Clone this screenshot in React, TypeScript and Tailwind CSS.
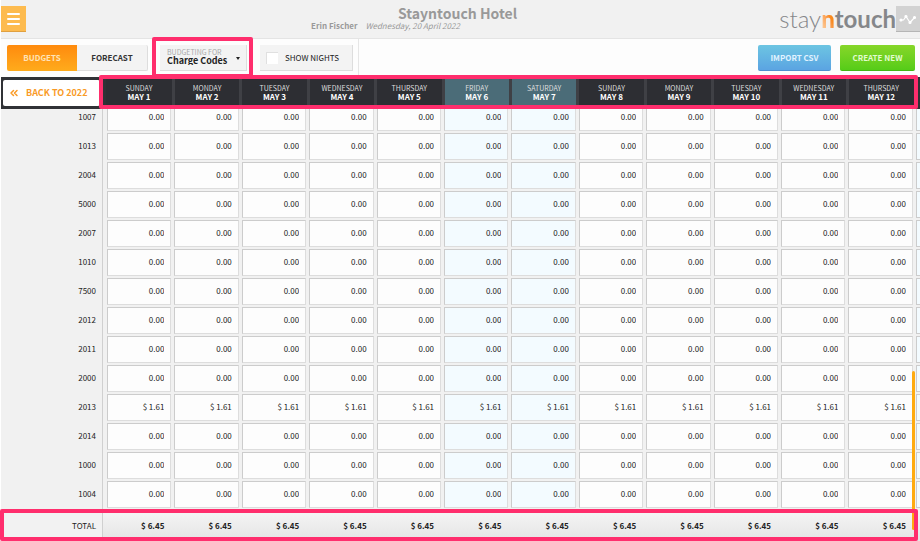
import { ChevronsLeft } from 'lucide-react'
import clsx from 'clsx'

const DAYS = [
  { day: 'SUNDAY', date: 'MAY 1' },
  { day: 'MONDAY', date: 'MAY 2' },
  { day: 'TUESDAY', date: 'MAY 3' },
  { day: 'WEDNESDAY', date: 'MAY 4' },
  { day: 'THURSDAY', date: 'MAY 5' },
  { day: 'FRIDAY', date: 'MAY 6', weekend: true },
  { day: 'SATURDAY', date: 'MAY 7', weekend: true },
  { day: 'SUNDAY', date: 'MAY 8' },
  { day: 'MONDAY', date: 'MAY 9' },
  { day: 'TUESDAY', date: 'MAY 10' },
  { day: 'WEDNESDAY', date: 'MAY 11' },
  { day: 'THURSDAY', date: 'MAY 12' },
]

const ROWS = [
  { code: '1007', value: '0.00' },
  { code: '1013', value: '0.00' },
  { code: '2004', value: '0.00' },
  { code: '5000', value: '0.00' },
  { code: '2007', value: '0.00' },
  { code: '1010', value: '0.00' },
  { code: '7500', value: '0.00' },
  { code: '2012', value: '0.00' },
  { code: '2011', value: '0.00' },
  { code: '2000', value: '0.00' },
  { code: '2013', value: '$ 1.61' },
  { code: '2014', value: '0.00' },
  { code: '1000', value: '0.00' },
  { code: '1004', value: '0.00' },
]

function Header() {
  return (
    <header className="relative flex h-[39px] items-center justify-between border-b border-[#e4e4e4] bg-[#f1f1f1]">
      <button
        aria-label="Menu"
        className="flex h-[26px] w-[25px] flex-col items-center justify-center gap-[3px] border-b border-[#e0a040] bg-[#fdbb4f]"
      >
        <span className="h-[2px] w-[13px] rounded-full bg-white" />
        <span className="h-[2px] w-[13px] rounded-full bg-white" />
        <span className="h-[2px] w-[13px] rounded-full bg-white" />
      </button>

      {/* hotel name, centred over the bar */}
      <div className="absolute top-[5px] right-[6px] left-0 text-center text-[#999]">
        <h1 className="text-[14px] leading-4 font-bold">Stayntouch Hotel</h1>
        <p className="flex justify-center gap-2 pr-36 text-[8px] leading-[10px]">
          <span className="font-bold">Erin Fischer</span>
          <em>Wednesday, 20 April 2022</em>
        </p>
      </div>

      <div className="flex items-center">
        <div className="font-[Lato,sans-serif] text-[24px] leading-[26px] text-[#85878a]">
          <span className="font-light">stay</span>
          <span className="bg-linear-to-tr from-[#fcc48c] from-20% to-[#f98a1e] to-60% bg-clip-text font-black text-transparent">n</span>
          <span className="font-bold">touch</span>
        </div>
        <button
          aria-label="Statistics"
          className="flex h-[26px] w-6 items-center justify-center border-b border-[#b5b5b5] bg-[#d2d2d2]"
        >
          <svg width="18" height="12" viewBox="0 0 18 12" fill="none" stroke="#fff" strokeWidth="1.2" strokeLinejoin="round">
            <path d="M2 7 H4.5 L7 3.5 L11 9.5 L15.5 4.5" />
            <circle cx="2" cy="7" r="1" fill="#fff" />
            <circle cx="7" cy="3.5" r="1" fill="#fff" />
            <circle cx="11" cy="9.5" r="1" fill="#fff" />
            <circle cx="15.5" cy="4.5" r="1" fill="#fff" />
          </svg>
        </button>
      </div>
    </header>
  )
}

function Toolbar() {
  return (
    <div className="flex h-[38px] items-stretch bg-[#fdfdfd] pr-[5px] pl-[6px] text-[8px]">
      <div className="flex py-[6px]">
        <button className="w-[70px] rounded-l-xs bg-linear-to-b from-[#ff8a0d] to-[#ffab1c] font-bold text-[#ffe3b8]">BUDGETS</button>
        <button className="w-[71px] rounded-r-xs border-r border-b border-[#ddd] bg-[#f3f3f3] font-bold text-[#333]">FORECAST</button>
      </div>

      <div className="relative ml-3 flex py-[6px]">
        <label className="relative flex w-[87px] flex-col justify-center border-r border-b border-[#ddd] bg-[#f3f3f3] pb-[2px] pl-[7px]">
          <span className="text-[7px] leading-[8px] text-[#aaa]">BUDGETING FOR</span>
          <select className="w-full appearance-none bg-transparent text-[9px] leading-[9px] font-bold text-[#222]">
            <option>Charge Codes</option>
            <option>Markets</option>
          </select>
          <span className="pointer-events-none absolute top-3 right-[6px] border-x-2 border-t-[3px] border-x-transparent border-t-[#222]" />
        </label>
        <div className="pointer-events-none absolute -top-[2px] -right-[6px] -bottom-px -left-2 rounded-xs border-4 border-[#ff2e6d]" />
      </div>

      <div className="ml-[13px] flex border-r border-[#e6e6e6] py-[6px] pr-[5px]">
        <label className="flex w-[93px] items-center gap-[7px] border-r border-b border-[#ddd] bg-[#f3f3f3] pl-[6px] text-[#222]">
          <input type="checkbox" className="size-3 appearance-none border-t border-l border-[#e0e0e0] bg-white" />
          SHOW NIGHTS
        </label>
      </div>

      <div className="ml-auto flex gap-[9px] py-[6px]">
        <button className="w-[73px] rounded-xs border-b border-[#4f8fd0] bg-linear-to-b from-[#6dc5e2] to-[#5ba4e2] font-bold text-[#e0f3ff]">IMPORT CSV</button>
        <button className="w-[75px] rounded-xs border-b border-[#45b512] bg-linear-to-b from-[#86d629] to-[#55cc18] font-bold text-[#e2fbd0]">CREATE NEW</button>
      </div>
    </div>
  )
}

function BudgetTable() {
  return (
    <div className="relative">
      <table className="w-full table-fixed border-collapse text-[8px] text-[#222]">
        <colgroup>
          <col className="w-[105px]" />
          {DAYS.map(({ date }) => (
            <col key={date} />
          ))}
          <col className="w-[5px]" />
        </colgroup>

        <thead>
          <tr className="h-8 bg-[#303236]">
            <th className="p-0 pr-[6px] pl-[2px]">
              <button className="flex h-[26px] w-full items-center gap-2 rounded-xs bg-white pl-[5px] text-[9px] font-bold text-[#f99a26]">
                <ChevronsLeft size={12} strokeWidth={3} />
                <span className="-ml-[2px]">BACK TO 2022</span>
              </button>
            </th>
            {DAYS.map(({ day, date, weekend }) => (
              <th
                key={date}
                scope="col"
                className={clsx('border-r-[3px] border-[#3f4045] p-0 pb-[2px] text-center text-white', weekend ? 'bg-[#4b6c78]' : 'bg-[#2d2e33]')}
              >
                <span className="block text-[7px] leading-[8px] font-normal text-[#ddd]">{day}</span>
                <span className="block text-[8px] leading-[9px] font-bold">{date}</span>
              </th>
            ))}
            <th className="p-0" />
          </tr>
        </thead>

        <tbody>
          {ROWS.map(({ code, value }, i) => (
            // the first row is partly scrolled under the header
            <tr key={code} className={i === 0 ? 'h-6' : 'h-[29px]'}>
              <th scope="row" className="p-0">
                <div className={clsx('mr-[3px] flex items-center justify-end border-r border-[#d0d0d0] pr-[6px] font-normal', i === 0 ? 'h-6 pb-[9px]' : 'h-[29px] pb-1')}>
                  {code}
                </div>
              </th>
              {DAYS.map(({ date, weekend }) => (
                <td key={date} className="p-0 pr-[2px] pb-[2px] pl-px">
                  <input
                    defaultValue={value}
                    aria-label={`${code} ${date}`}
                    className={clsx(
                      'block w-full rounded-none border-[#ccc] pr-[6px] text-right',
                      weekend ? 'bg-[#f3fbff]' : 'bg-[#fdfdfd]',
                      i === 0 ? 'h-[22px] border-x border-b border-r-[#ddd] border-b-[#ddd] pb-[7px]' : 'h-[27px] border border-r-[#ddd] border-b-[#ddd] pb-[2px]',
                    )}
                  />
                </td>
              ))}
              <td className="p-0 pb-[2px] pl-px">
                <div className={clsx('border-l border-[#ccc] bg-[#f3fbff]', i === 0 ? 'h-[22px] border-b' : 'h-[27px] border-y')} />
              </td>
            </tr>
          ))}
        </tbody>

        <tfoot>
          <tr className="h-[31px] bg-linear-to-b from-[#f6f6f6] to-[#e4e4e4]">
            <th scope="row" className="p-0">
              <div className="mr-[3px] flex h-[31px] items-center justify-end border-r border-[#d0d0d0] bg-[#f2f2f2] pr-[6px] font-normal">
                TOTAL
              </div>
            </th>
            {DAYS.map(({ date }) => (
              <td key={date} className="p-0 pr-[9px] text-right font-bold">
                $ 6.45
              </td>
            ))}
            <td className="p-0" />
          </tr>
        </tfoot>
      </table>

      {/* scroll thumb */}
      <div className="absolute right-[5px] bottom-[11px] h-[159px] w-[3px] rounded-full bg-[#ffab10]" />

      {/* highlights */}
      <div className="pointer-events-none absolute -top-[2px] right-[2px] left-[98px] h-[34px] rounded-xs border-4 border-[#ff2e6d]" />
      <div className="pointer-events-none absolute right-[2px] bottom-0 -left-px h-8 rounded-xs border-4 border-[#ff2e6d]" />
    </div>
  )
}

export default function App() {
  return (
    <div className="bg-white pl-px font-['Noto_Sans_CJK_JP',sans-serif]">
      <div className="bg-[#f1f1f1]">
        <Header />
        <Toolbar />
        <BudgetTable />
      </div>
    </div>
  )
}
